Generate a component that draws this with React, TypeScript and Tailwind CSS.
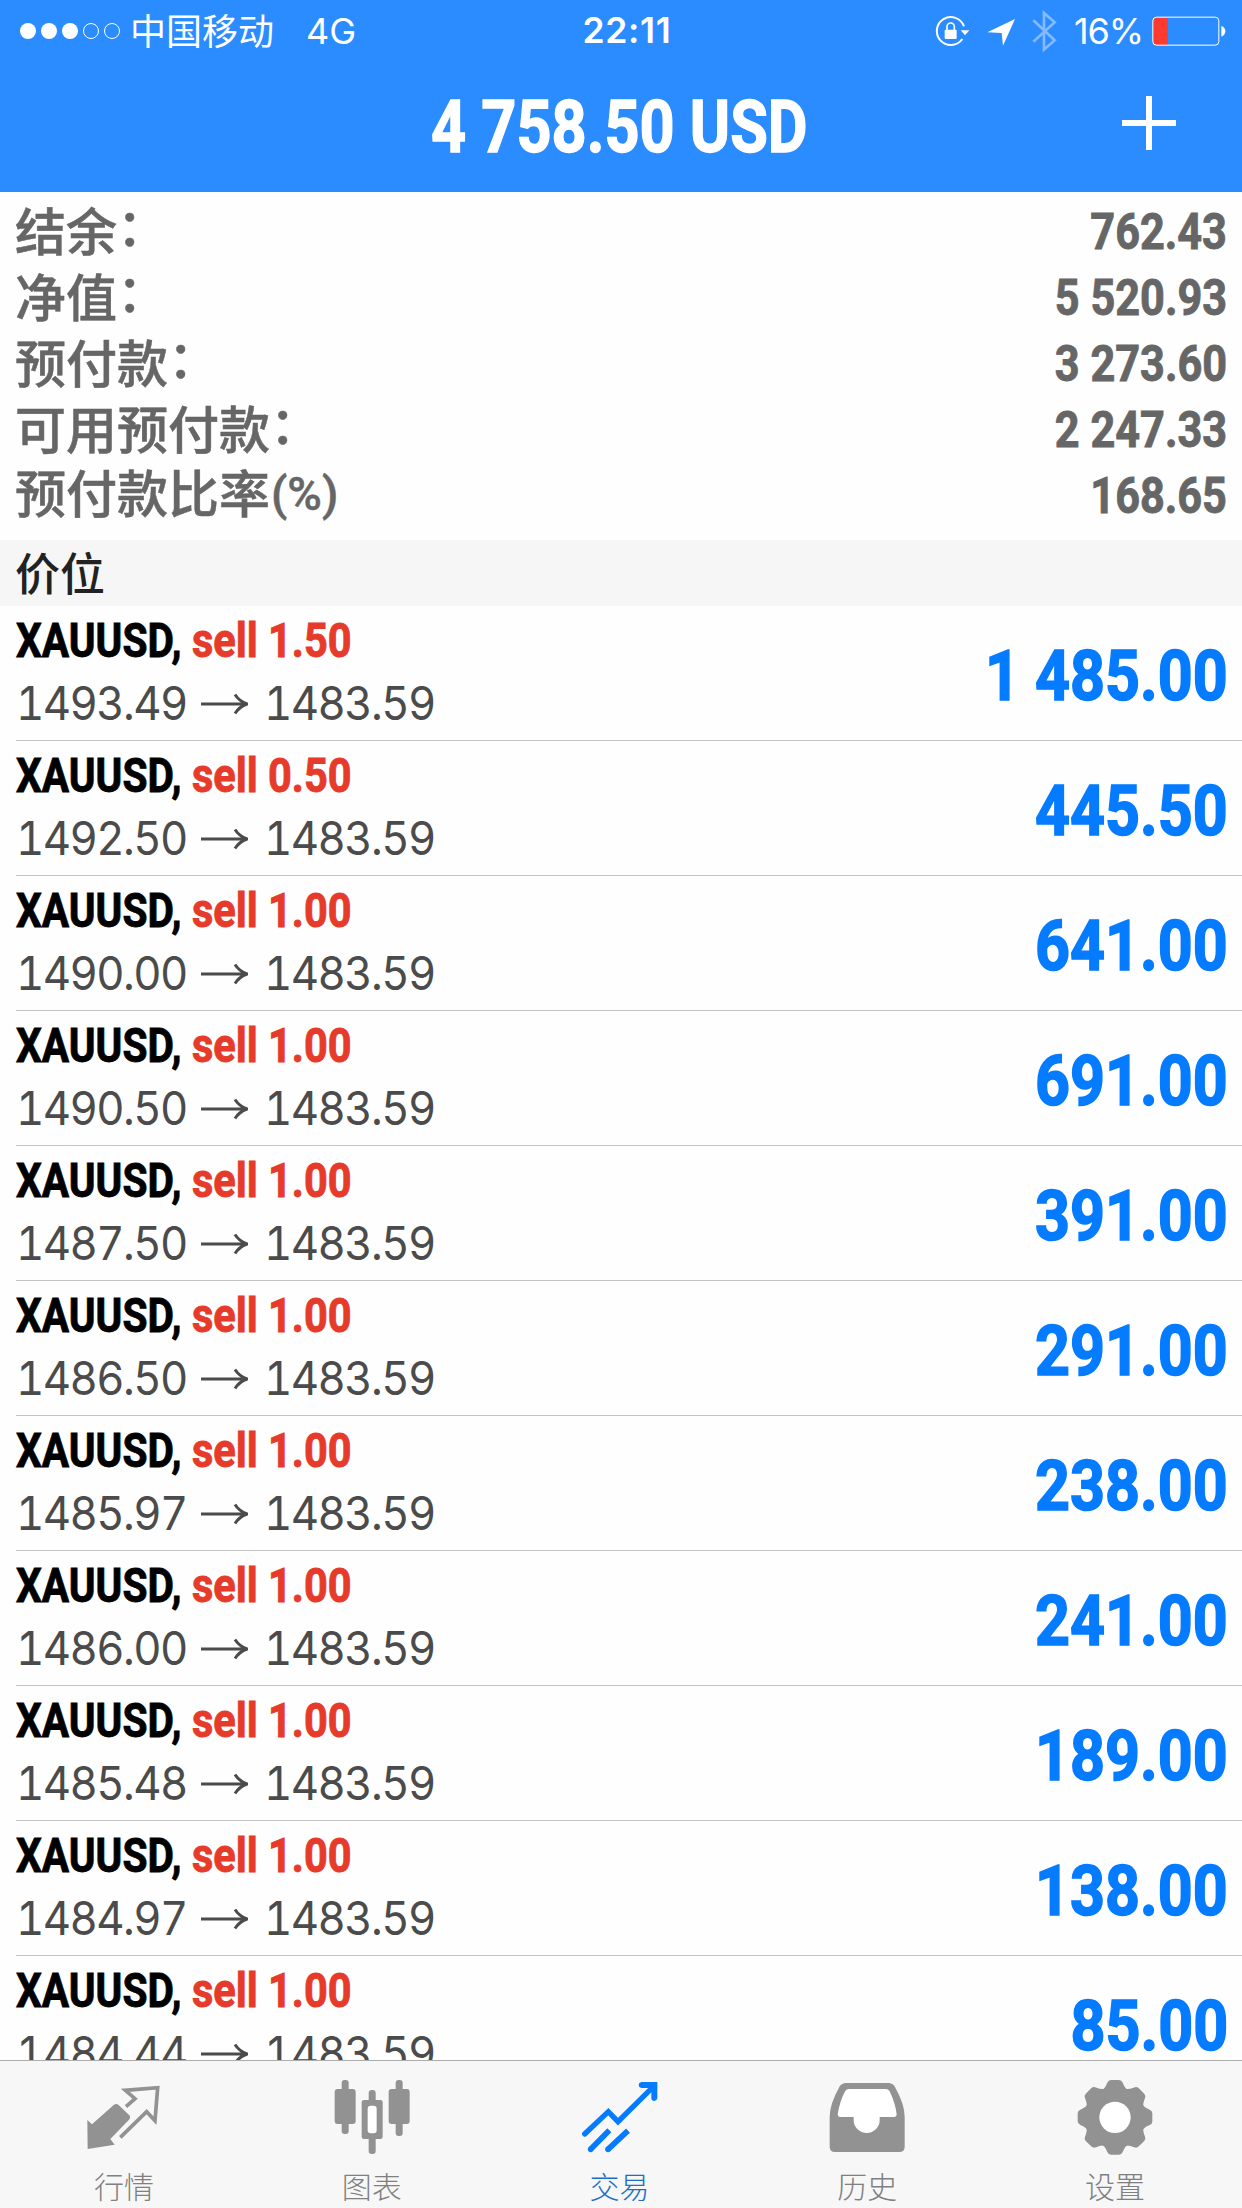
import type { ReactNode } from "react";

const BOLD = "font-['Roboto','Liberation_Sans',sans-serif] font-bold";
const CJK = "font-['Noto_Sans_CJK_SC',sans-serif]";
const UI = "font-['Inter','Noto_Sans_CJK_SC',sans-serif]";

const summary = [
  ["结余", "：", "762.43"],
  ["净值", "：", "5 520.93"],
  ["预付款", "：", "3 273.60"],
  ["可用预付款", "：", "2 247.33"],
  ["预付款比率", "(%)", "168.65"],
];

const positions = [
  ["1.50", "1493.49", "1 485.00"],
  ["0.50", "1492.50", "445.50"],
  ["1.00", "1490.00", "641.00"],
  ["1.00", "1490.50", "691.00"],
  ["1.00", "1487.50", "391.00"],
  ["1.00", "1486.50", "291.00"],
  ["1.00", "1485.97", "238.00"],
  ["1.00", "1486.00", "241.00"],
  ["1.00", "1485.48", "189.00"],
  ["1.00", "1484.97", "138.00"],
  ["1.00", "1484.44", "85.00"],
];

function StatusBar() {
  return (
    <div className={`${UI} grid h-[60px] grid-cols-3 pt-[2px] text-[36px] leading-[58px] text-white`}>
      <div className="flex items-center pl-5">
        <div className="flex gap-[5px]">
          {[1, 1, 1, 0, 0].map((on, i) => (
            <i key={i} className={on ? "size-4 rounded-full bg-white" : "size-4 rounded-full border border-white"} />
          ))}
        </div>
        <span className={`${CJK} -mt-[5px] ml-[10px]`}>中国移动</span>
        <span className="ml-[32px]">4G</span>
      </div>
      <div className="pl-[12px] text-center text-[35.500px] font-semibold tracking-[0.7px]">22:11</div>
      <div className="flex items-center justify-end pr-[16px]">
        <svg className="h-[44px] w-[124px]" viewBox="100 24 372 132" fill="none">
          <path d="M190 76A42 42 0 1 0 185 114" stroke="#fff" strokeWidth="6" />
          <path d="M180 88h26l-13 15z" fill="#fff" />
          <rect x="132" y="86" width="36" height="28" rx="3" fill="#fff" />
          <path d="M139 88V77a11 11 0 0 1 22 0v11" stroke="#fff" strokeWidth="5" />
          <path d="M343 54L307 134L303 96L260 94Z" fill="#fff" />
          <path d="M398 58L462 118L430 146V36L462 64L398 122" stroke="#84baff" strokeWidth="8" />
        </svg>
        <span className="ml-[16px] tracking-[-1.1px]">16%</span>
        <svg className="ml-[9px] h-[30px] w-[74px]" viewBox="755 46 222 90">
          <path d="M767 51h36v82h-36q-9 0-9-9V60q0-9 9-9z" fill="#ff3b30" />
          <rect x="757.5" y="49.500" width="198" height="84" rx="11" fill="none" stroke="#fff" strokeWidth="3" />
          <path d="M963 76q12 4 12 16t-12 16z" fill="#fff" />
        </svg>
      </div>
    </div>
  );
}

function TitleBar() {
  return (
    <div className="grid h-[132px] grid-cols-[1fr_auto_1fr] items-center text-white">
      <span />
      <h1 className={`${BOLD} mt-[4px] ml-[-4px] w-[376px] text-[72px] leading-none whitespace-nowrap [-webkit-text-stroke:1.4px_currentColor]`}>
        <span className="block w-max origin-left scale-x-[0.85]">4 758.50 USD</span>
      </h1>
      <svg className="mr-[66px] mb-[6px] size-[54px] justify-self-end" viewBox="0 0 54 54">
        <path d="M27 0v54M0 27h54" stroke="#fff" strokeWidth="6" />
      </svg>
    </div>
  );
}

function Position({ volume, open, profit }: { volume: string; open: string; profit: string }) {
  return (
    <li className="ml-4 flex h-[135px] shrink-0 justify-between border-b border-[#c4c4c6]">
      <div className="w-[440px] pt-[8px]">
        <p className={`${BOLD} flex text-[48px] leading-[54px] whitespace-nowrap [-webkit-text-stroke:0.9px_currentColor]`}>
          <span className="w-[176px] text-black">
            <span className="block w-max origin-left scale-x-[0.847]">XAUUSD,</span>
          </span>
          <span className="block w-max origin-left scale-x-[0.865] text-[#e63a2a]">sell {volume}</span>
        </p>
        <p className={`${UI} mt-[7px] flex items-center text-[47px] leading-[56px] text-[#4b4b4b] tabular-nums`}>
          <span className="w-[174px] shrink-0">
            <span className="block w-max origin-left scale-x-[0.93] tracking-[-1.7px]">{open}</span>
          </span>
          <svg className="mt-[2px] ml-[11px] h-[22px] w-[47px] shrink-0" viewBox="0 0 47 22" fill="none" stroke="currentColor" strokeWidth="3">
            <path d="M0 11h45M34 1.500Q38 8 46 11Q38 14 34 20.500" />
          </svg>
          <span className="ml-[16px] block w-max origin-left scale-x-[0.93] tracking-[-1.7px]">1483.59</span>
        </p>
      </div>
      <p className={`${BOLD} mt-[34px] mr-[14px] origin-right scale-x-[0.865] text-[70.500px] leading-[72px] text-[#057bff] [-webkit-text-stroke:1.6px_currentColor]`}>
        {profit}
      </p>
    </li>
  );
}

function Tab({ label, box, active, children }: { label: string; box: string; active?: boolean; children: ReactNode }) {
  return (
    <li className={`flex flex-col items-center ${active ? "text-[#057bff]" : "text-[#929292]"}`}>
      <svg className="mt-[15px] size-[80px]" viewBox={box} fill="currentColor">
        {children}
      </svg>
      <span className={`${CJK} mt-[7px] text-[30px] leading-[44px] font-light ${active ? "text-[#1c6fc8]" : "text-[#808080]"}`}>
        {label}
      </span>
    </li>
  );
}

export default function App() {
  return (
    <div className="flex h-[2208px] w-[1242px] flex-col overflow-hidden bg-[#fefefe]">
      <header className="h-[192px] shrink-0 bg-[#2b8cff]">
        <StatusBar />
        <TitleBar />
      </header>

      <dl className="h-[348px] shrink-0 pt-[7px] pr-[15px] pl-[15px] text-[#666666]">
        {summary.map(([name, suffix, value]) => (
          <div key={name} className="flex h-[66px] items-center justify-between">
            <dt className={`${CJK} -mt-[7px] flex text-[51px] leading-[66px] font-medium [-webkit-text-stroke:0.5px_currentColor]`}>
              {name}
              {suffix === "(%)" ? (
                <span className="mt-[3px] ml-[1px] font-['Roboto'] text-[47px]">{suffix}</span>
              ) : (
                <span className="-mt-[5px]">{suffix}</span>
              )}
            </dt>
            <dd className={`${BOLD} origin-right scale-x-[0.865] text-[50px] leading-[66px] [-webkit-text-stroke:0.9px_currentColor]`}>{value}</dd>
          </div>
        ))}
      </dl>

      <h2 className={`${CJK} h-[66px] shrink-0 bg-[#f6f6f7] pl-[15px] text-[45px] leading-[64px] font-medium text-[#222222]`}>价位</h2>

      <ul className="flex min-h-0 flex-1 flex-col overflow-hidden">
        {positions.map(([volume, open, profit]) => (
          <Position key={open} volume={volume} open={open} profit={profit} />
        ))}
      </ul>

      <ul className="grid h-[148px] shrink-0 grid-cols-5 border-t border-[#adadad] bg-[#f7f7f7] pr-[3px]">
        <Tab label="行情" box="251 408 240 240">
          <path d="M261 540L275 553L340 495Q348 489 355 495L387 526Q392 532 386 539L330 597L343 614L262 627Z" />
          <path d="M377 500L404 476L375 451L472 443L464 542L439 515L360 592" fill="none" stroke="currentColor" strokeWidth="11" />
        </Tab>
        <Tab label="图表" box="997 408 240 240">
          <rect x="1026" y="420" width="21" height="162" rx="9" />
          <rect x="1005" y="447" width="63" height="105" rx="9" />
          <rect x="1188" y="420" width="21" height="168" rx="9" />
          <rect x="1167" y="447" width="63" height="105" rx="9" />
          <rect x="1107" y="450" width="21" height="192" rx="9" />
          <rect x="1086" y="480" width="63" height="117" rx="7" />
          <rect x="1104" y="497" width="27" height="83" rx="9" fill="#fff" />
        </Tab>
        <Tab label="交易" box="386 108 240 240" active>
          <path d="M403 282L474 215L503 245L612 137" fill="none" stroke="currentColor" strokeWidth="16" strokeLinecap="round" />
          <path d="M573 126H621V175Q619 183 612 183Q604 183 603 175V144H573Q565 142 565 135Q565 128 573 126Z" />
          <path d="M421 328L477 271M473 328L533 272" fill="none" stroke="currentColor" strokeWidth="17" />
          <circle cx="421" cy="328" r="8.500" />
          <circle cx="473" cy="328" r="8.500" />
        </Tab>
        <Tab label="历史" box="142 348 240 240">
          <path d="M200 369H326Q339 369 346 381Q375 433 375 470V560Q375 576 359 576H166Q150 576 150 560V470Q150 433 179 381Q186 369 200 369Z" />
          <path d="M207 387H318Q327 387 331 396Q347 430 351 463Q351 471 345 471H300V481A39 38 0 0 1 222 481V471H180Q174 471 174 463Q180 425 195 396Q199 387 207 387Z" fill="#fff" />
        </Tab>
        <Tab label="设置" box="889 348 240 240">
          {[0, 45, 90, 135, 180, 225, 270, 315].map((deg) => (
            <path
              key={deg}
              transform={`rotate(${deg} 1009 472)`}
              d="M970 389Q978 387 986 368Q989 360 997 360H1021Q1029 360 1032 368Q1040 387 1048 389V472H970Z"
            />
          ))}
          <circle cx="1009" cy="472" r="88" />
          <circle cx="1009" cy="472" r="47" fill="#fff" />
        </Tab>
      </ul>
    </div>
  );
}
